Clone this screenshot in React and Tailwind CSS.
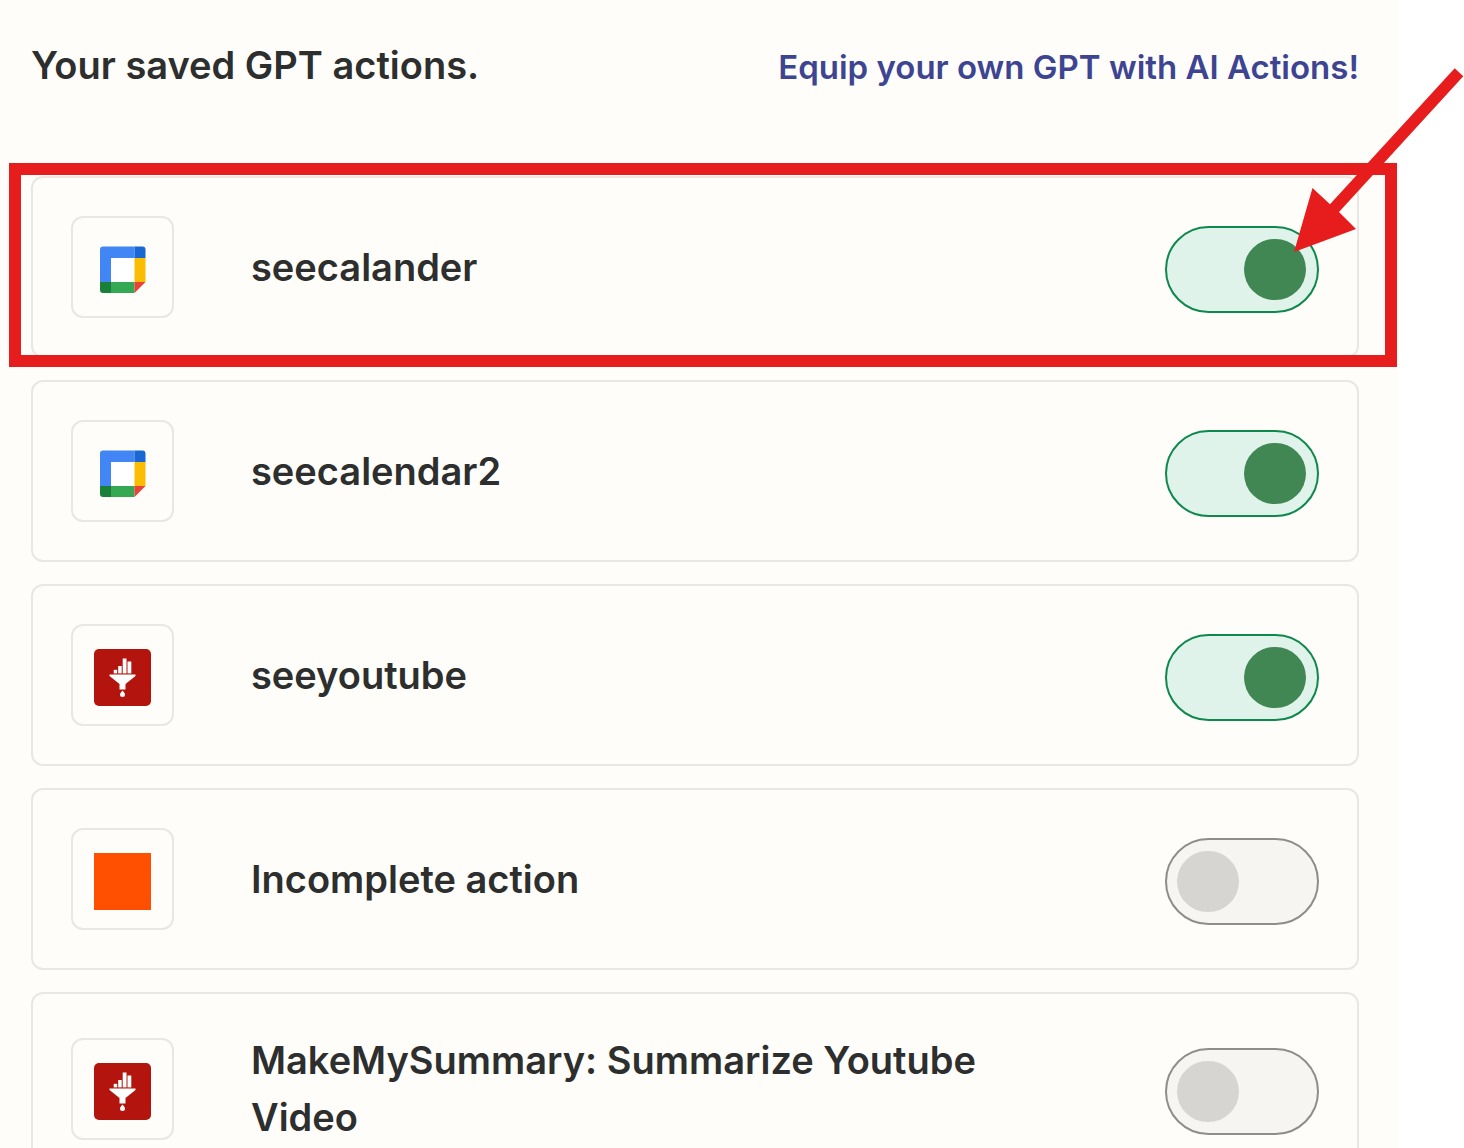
import { useState } from "react";

const savedActions = [
  { id: 1, name: "seecalander", icon: "calendar", enabled: true, highlighted: true },
  { id: 2, name: "seecalendar2", icon: "calendar", enabled: true },
  { id: 3, name: "seeyoutube", icon: "funnel", enabled: true },
  { id: 4, name: "Incomplete action", icon: "blank", enabled: false },
  { id: 5, name: "MakeMySummary: Summarize Youtube Video", icon: "funnel", enabled: false },
];

export default function App() {
  const [actions, setActions] = useState(savedActions);

  const toggleAction = (id) => {
    setActions(actions.map((a) => (a.id === id ? { ...a, enabled: !a.enabled } : a)));
  };

  return (
    <div className="h-screen overflow-hidden bg-white font-['Inter',sans-serif] text-[#2d2e2e]">
      <main className="mr-[66px] min-h-full bg-[#fffdf9] pt-[35px] pr-[39px] pl-[31px]">
        {/* Header */}
        <header className="flex items-baseline justify-between">
          <h1 className="text-[38px] leading-[60px] font-semibold">Your saved GPT actions.</h1>
          <a href="#equip" className="text-[33px] leading-[57px] font-semibold text-[#3d4592]">
            Equip your own GPT with AI Actions!
          </a>
        </header>

        {/* Actions */}
        <ul className="mt-20 flex flex-col gap-[22px]">
          {actions.map((action) => (
            <ActionCard key={action.id} action={action} onToggle={() => toggleAction(action.id)} />
          ))}
        </ul>
      </main>
    </div>
  );
}

function ActionCard({ action, onToggle }) {
  const inputId = `action-${action.id}`;
  return (
    <li className="relative">
      <div className="flex items-center rounded-xl border-2 border-[#e8e7e4] p-[38px]">
        <div className="shrink-0 rounded-xl border-2 border-[#e8e7e4] px-[21px] pt-[23px] pb-[18px]">
          <ActionIcon icon={action.icon} />
        </div>
        <label htmlFor={inputId} className="mr-24 ml-[77px] flex-1 text-[38px] leading-[57px] font-semibold">
          {action.name}
        </label>
        <Toggle id={inputId} checked={action.enabled} onChange={onToggle} />
      </div>
      {action.highlighted && <Highlight />}
    </li>
  );
}

function Toggle({ id, checked, onChange }) {
  return (
    <span className="mt-1 grid h-[87px] w-[154px] shrink-0">
      <input
        id={id}
        type="checkbox"
        role="switch"
        checked={checked}
        onChange={onChange}
        className="peer col-start-1 row-start-1 cursor-pointer appearance-none rounded-full border-2 border-[#8f8d89] bg-[#f6f5f2] checked:border-[#0f884e] checked:bg-[#dff3ea]"
      />
      <span className="pointer-events-none col-start-1 row-start-1 mr-[13px] ml-3 h-[61px] w-[62px] self-center justify-self-start rounded-full bg-[#d7d5d2] peer-checked:justify-self-end peer-checked:bg-[#408754]" />
    </span>
  );
}

function ActionIcon({ icon }) {
  if (icon === "calendar") {
    return (
      <svg viewBox="0 0 57 57" className="size-[57px]" aria-hidden="true">
        <path d="M17 17h24v24H17z" fill="#fff" />
        <path d="M9 5.500h31.500v11.500H17v24H6V8.500a3 3 0 0 1 3-3z" fill="#4285f4" />
        <path d="M40.500 5.500h8a3 3 0 0 1 3 3V17h-11z" fill="#1967d2" />
        <path d="M40.500 17h11v24h-11z" fill="#fbbc04" />
        <path d="M17 41h23.500v11H17z" fill="#34a853" />
        <path d="M6 41h11v11H9a3 3 0 0 1-3-3z" fill="#188038" />
        <path d="M40.500 41h11l-11 11z" fill="#ea4335" />
      </svg>
    );
  }

  if (icon === "funnel") {
    return (
      <svg viewBox="0 0 57 57" className="size-[57px]" aria-hidden="true">
        <rect width="57" height="57" rx="5" fill="#b3140d" />
        <g fill="#fff">
          <rect x="19.700" y="20.800" width="3.500" height="3.600" />
          <rect x="24.200" y="17" width="3.500" height="7.400" />
          <rect x="28.700" y="9.500" width="3.800" height="14.900" />
          <rect x="33.500" y="12.500" width="3.800" height="11.900" />
          <path d="M15.500 25.500h26v1.500L31.500 35v5.500h-6V35L15.500 27z" />
          <path d="M28.500 41.500c1 1.600 2.500 2.500 2.500 4a2.500 2.500 0 0 1-5 0c0-1.500 1.500-2.400 2.500-4z" />
        </g>
      </svg>
    );
  }

  return <div className="size-[57px] bg-[#ff4f00]" />;
}

// Red frame and arrow pointing at the switch
function Highlight() {
  return (
    <>
      <div className="pointer-events-none absolute -top-[13px] -right-[38px] -bottom-[9px] -left-[22px] border-12 border-[#e71d1d]" />
      <svg
        viewBox="0 0 172 188"
        className="pointer-events-none absolute -top-[110px] -right-[106px] h-[188px] w-[172px]"
        fill="#e71d1d"
        aria-hidden="true"
      >
        <path d="M161.700 2.300L170.300 10.300L46 146L63 163L1 186L19.500 122L37 138.300z" />
      </svg>
    </>
  );
}
